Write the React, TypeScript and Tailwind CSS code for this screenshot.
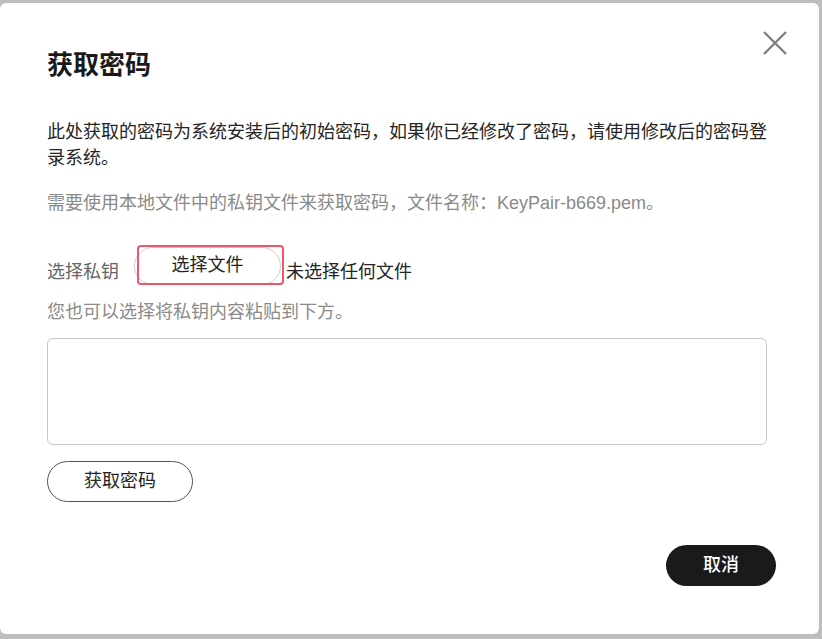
import { useState } from 'react'

export default function App() {
  const [key, setKey] = useState('')

  return (
    <div className="h-[639px] w-[822px] overflow-hidden bg-[#bdbdbd] pt-[3px] font-['Liberation_Sans','Noto_Sans_CJK_SC',sans-serif]">
      <div className="relative h-[631px] w-[819px] rounded-[6px] bg-white pl-[47px] pr-[43px] pt-[44px]">
        {/* Close */}
        <button className="absolute left-[761px] top-[25px] h-[28px] w-[28px] text-[#7f7f7f]" aria-label="close">
          <svg viewBox="0 0 28 28" className="h-[28px] w-[28px]" fill="none" stroke="currentColor" strokeWidth="2.4">
            <path d="M3 4 L25 26 M25 4 L3 26" />
          </svg>
        </button>

        <h2 className="text-[26px] font-bold leading-[36px] text-[#1a1a1a]">获取密码</h2>

        <p className="mt-[36px] w-[724px] text-[18px] leading-[26px] text-[#252525]">
          此处获取的密码为系统安装后的初始密码，如果你已经修改了密码，请使用修改后的密码登录系统。
        </p>

        <p className="mt-[19px] text-[18px] leading-[26px] text-[#8a8a8a]">
          需要使用本地文件中的私钥文件来获取密码，文件名称：KeyPair-b669.pem。
        </p>

        <div className="mt-[31px] flex items-end text-[18px] leading-[26px]">
          <span className="text-[#666]">选择私钥</span>
          <div className="relative ml-[15px]">
            <button className="flex h-[38px] w-[147px] items-center justify-center rounded-full border border-[#cfcfcf] bg-white pb-[2px] text-[18px] text-[#252525]">
              选择文件
            </button>
            <div className="pointer-events-none absolute left-[3px] top-[-2px] h-[40px] w-[147px] rounded-[4px] border-[2.5px] border-[#f0566b]" />
          </div>
          <span className="ml-[5px] text-[#252525]">未选择任何文件</span>
        </div>

        <p className="mt-[14px] text-[18px] leading-[26px] text-[#8a8a8a]">您也可以选择将私钥内容粘贴到下方。</p>

        <textarea
          value={key}
          onChange={(e) => setKey(e.target.value)}
          className="mt-[13px] block h-[107px] w-[720px] resize-none rounded-[6px] border border-[#c8c8c8] p-2 text-[16px] outline-none"
        />

        <button className="mt-[16px] flex h-[41px] w-[146px] items-center justify-center rounded-full border border-[#555] text-[18px] text-[#252525]">
          获取密码
        </button>

        <div className="mt-[43px] flex justify-end">
          <button className="flex h-[41px] w-[110px] items-center justify-center rounded-full bg-[#1a1a1a] text-[18px] font-medium text-white">
            取消
          </button>
        </div>
      </div>
    </div>
  )
}
